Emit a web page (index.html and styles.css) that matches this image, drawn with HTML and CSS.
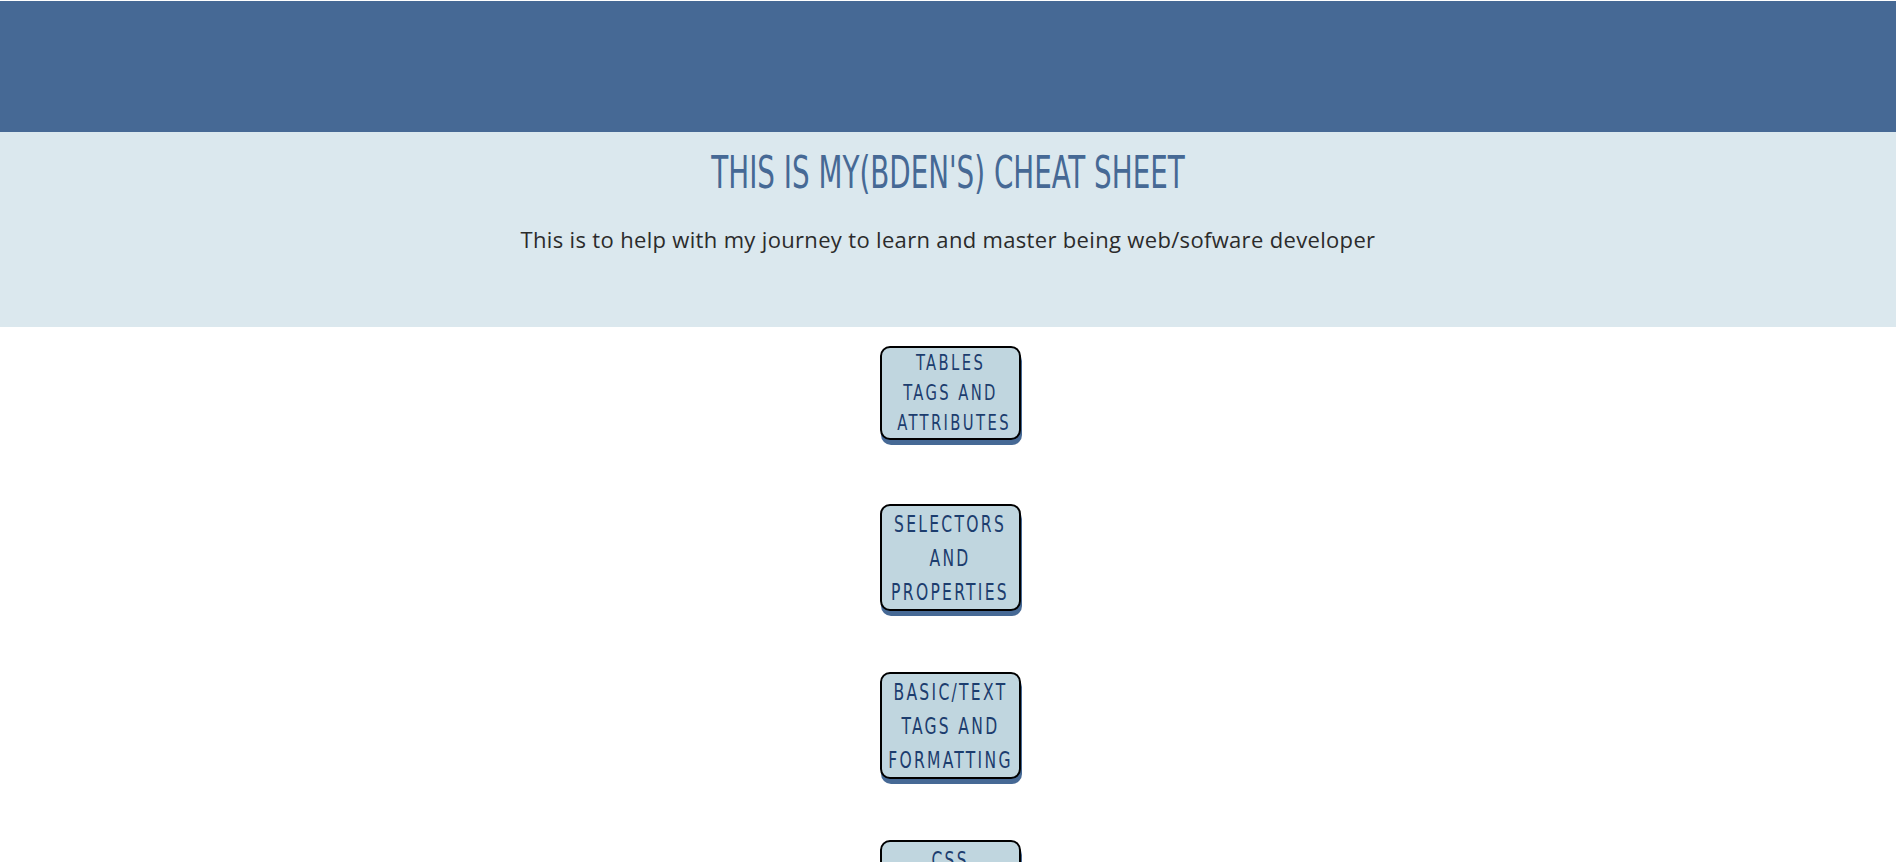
FILE: index.html
```html
<!DOCTYPE html>
<html lang="en">
<head>
<meta charset="utf-8">
<title>Cheat Sheet</title>
<link rel="stylesheet" href="styles.css">
</head>
<body>
<header class="topbar"></header>
<section class="banner">
  <h1 class="title"><span class="title__text">THIS IS MY(BDEN'S) CHEAT SHEET</span></h1>
  <p class="lead">This is to help with my journey to learn and master being web/sofware developer</p>
</section>
<main class="links">
  <a class="card card--small" href="#"><span class="card__text">TABLES<br>TAGS AND<br>&nbsp;ATTRIBUTES</span></a>
  <a class="card" href="#"><span class="card__text">SELECTORS<br>AND<br>PROPERTIES</span></a>
  <a class="card" href="#"><span class="card__text">BASIC/TEXT<br>TAGS AND<br>FORMATTING</span></a>
  <a class="card" href="#"><span class="card__text">CSS<br>BOX<br>MODEL</span></a>
</main>
</body>
</html>
```
FILE: styles.css
```css
html, body {
  margin: 0;
  padding: 0;
  background: #ffffff;
  overflow: hidden;
}

.topbar {
  height: 131px;
  margin-top: 1px;
  background: #466995;
}

.banner {
  height: 195px;
  background: #dbe8ee;
  text-align: center;
  overflow: hidden;
}

.title {
  margin: 0;
  padding-top: 15px;
  font-family: "Liberation Sans Narrow", "DejaVu Sans Condensed", "Liberation Sans", sans-serif;
  font-weight: 400;
  font-size: 45px;
  line-height: 52px;
  color: #466995;
}

.title__text {
  display: inline-block;
  transform: scaleX(0.686);
  transform-origin: center;
  white-space: nowrap;
}

.lead {
  margin: 25px 0 0;
  font-family: "Open Sans", sans-serif;
  font-size: 22px;
  line-height: 30px;
  letter-spacing: 0.33px;
  color: #2b2b2b;
}

.links {
  display: flex;
  flex-direction: column;
  align-items: center;
  gap: 61px;
  padding-top: 19px;
  padding-left: 5px;
}

.card {
  box-sizing: border-box;
  width: 141px;
  display: flex;
  justify-content: center;
  padding: 1px 0 0;
  border: 2px solid #000;
  border-radius: 10px;
  background: #c0d6df;
  box-shadow: 1px 5px 0 #466995;
  text-decoration: none;
  font-family: "Liberation Sans Narrow", "DejaVu Sans Condensed", "Liberation Sans", sans-serif;
  font-size: 22.6px;
  line-height: 34px;
  letter-spacing: 3px;
  color: #1c3d6e;
  text-align: center;
}

.card__text {
  display: inline-block;
  white-space: nowrap;
  transform: scaleX(0.765);
  transform-origin: center;
}

.card--small {
  padding: 0;
  margin-bottom: 3px;
  font-size: 20.5px;
  line-height: 30px;
}

.card--small .card__text {
  transform: scaleX(0.8);
}
```
